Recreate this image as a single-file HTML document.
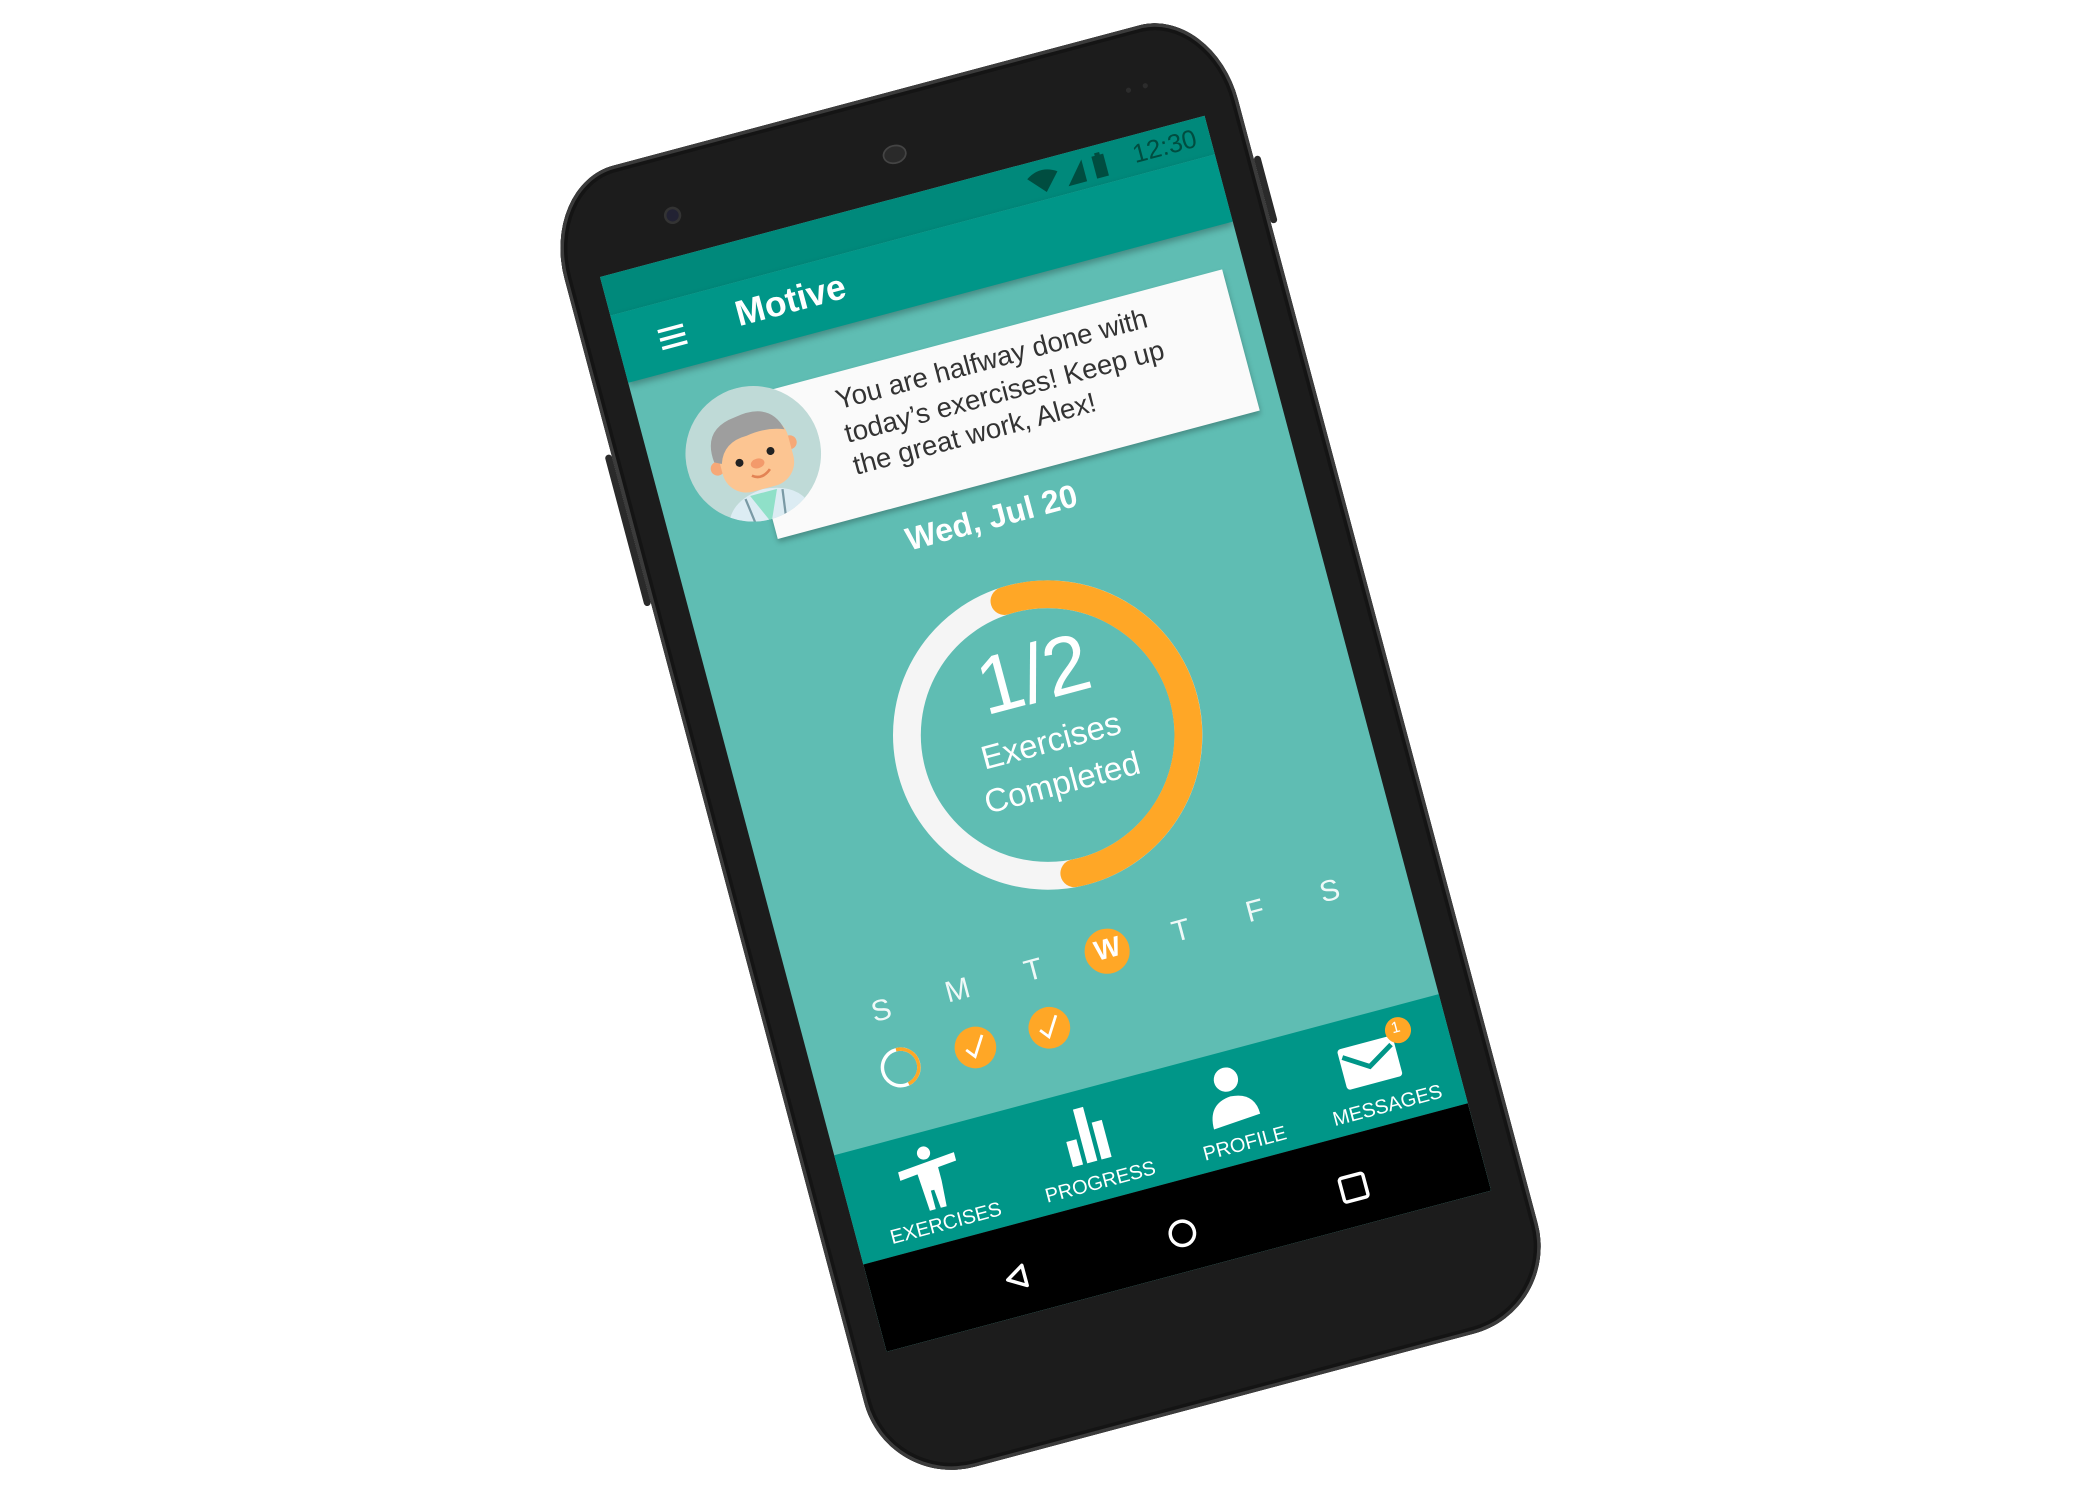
<!DOCTYPE html>
<html><head><meta charset="utf-8"><style>
html,body{margin:0;padding:0;background:#fff;width:2100px;height:1500px;overflow:hidden;font-family:"Liberation Sans",sans-serif}
#ph{position:absolute;left:0;top:0;width:360px;height:640px;transform-origin:0 0;transform:translate(600px,277px) rotate(-14.93deg) scale(1.738)}
.body{position:absolute;left:-20px;top:-60px;width:401px;height:777px;border-radius:44px 44px 52px 52px/56px 56px 52px 52px;background:#1c1c1c;box-shadow:inset 0 0 0 2px #3b3b3b,inset 0 0 0 4px #141414}
.btn{position:absolute;background:#2a2a2a;border-radius:2px}
.scr{position:absolute;left:0;top:0;width:360px;height:640px;overflow:hidden;background:#5fbdb3}
.abs{position:absolute}
.t{position:absolute;white-space:nowrap}
</style></head><body>
<div id="ph">
  <div class="body"></div>
  <div class="btn" style="left:381px;top:30px;width:4px;height:40px"></div>
  <div class="btn" style="left:-24px;top:100px;width:4px;height:90px"></div>
  <div class="abs" style="left:175px;top:-30px;width:14px;height:11px;border-radius:50%;background:#2a2a2a;box-shadow:inset 0 0 0 1px #444"></div>
  <div class="abs" style="left:46px;top:-27px;width:7px;height:7px;border-radius:50%;background:#223;box-shadow:0 0 0 1.5px #333"></div>
  <div class="abs" style="left:320px;top:-27px;width:3px;height:3px;border-radius:50%;background:#2c2c2c"></div>
  <div class="abs" style="left:330px;top:-27px;width:3px;height:3px;border-radius:50%;background:#2c2c2c"></div>

  <div class="scr">
    <div class="abs" style="left:0;top:0;width:360px;height:23px;background:#00897b"></div>
    <div class="t" style="right:8px;top:3px;font-size:15px;color:#004d40">12:30</div>
    <svg class="abs" style="left:250px;top:3px" width="60" height="18" viewBox="0 0 60 18">
      <path d="M2 6 Q11 0 20 6 L11 16 Z" fill="#004d40"/>
      <path d="M24 16 L35 3 L35 16 Z" fill="#004d40"/>
      <rect x="41" y="3" width="7" height="13" fill="#004d40"/><rect x="43" y="1.5" width="3" height="2" fill="#004d40"/>
    </svg>
    <div class="abs" style="left:0;top:23px;width:360px;height:40px;background:#009688;box-shadow:0 2px 4px rgba(0,0,0,.28)"></div>
    <svg class="abs" style="left:22px;top:36px" width="20" height="16" viewBox="0 0 20 16"><path d="M2 3H17M2 8H17M2 13H17" stroke="#fff" stroke-width="2"/></svg>
    <div class="t" style="left:70px;top:30px;font-size:20.5px;font-weight:bold;color:#fff">Motive</div>

    <div class="abs" style="left:60px;top:88px;width:287px;height:84px;background:#fafafa;box-shadow:0 2px 3px rgba(0,0,0,.25)"></div>
    <div class="t" style="left:113px;top:95px;font-size:15.9px;line-height:19.5px;color:#333">You are halfway done with<br>today’s exercises! Keep up<br>the great work, Alex!</div>
    <svg class="abs" style="left:20px;top:82px" width="78" height="78" viewBox="0 0 78 78">
      <defs><clipPath id="c"><circle cx="39" cy="39" r="39"/></clipPath></defs>
      <circle cx="39" cy="39" r="39" fill="#bfdad7"/>
      <g clip-path="url(#c)">
        <path d="M14 80 Q16 62 39 60 Q62 62 64 80 Z" fill="#dcecf3"/>
        <path d="M31 62 L39 80 L47 62 Z" fill="#8fe0c8"/>
        <path d="M28 63 L30 78 M50 63 L48 78" stroke="#7a9aa5" stroke-width="1.3"/>
        <circle cx="17" cy="42" r="4" fill="#f6a877"/><circle cx="61" cy="38" r="4" fill="#f6a877"/>
        <rect x="19" y="20" width="42" height="40" rx="14" fill="#fcc592"/>
        <path d="M16 38 Q14 18 34 16 Q56 12 60 30 Q50 26 38 28 Q24 28 20 40 Z" fill="#9e9e9e"/>
        <circle cx="30" cy="42" r="2.3" fill="#222"/><circle cx="49" cy="40" r="2.3" fill="#222"/>
        <ellipse cx="40" cy="45" rx="4" ry="2.8" fill="#f39a6b"/>
        <path d="M35 51 Q40 55 46 50" stroke="#e38354" stroke-width="1.5" fill="none"/>
      </g>
    </svg>

    <div class="t" style="left:0;width:364px;text-align:center;top:181px;font-size:18.5px;font-weight:bold;color:#fff">Wed, Jul 20</div>

    <svg class="abs" style="left:0;top:0" width="360" height="640" viewBox="0 0 360 640">
      <circle cx="181" cy="321" r="81" fill="none" stroke="#f5f5f5" stroke-width="16"/>
      <path d="M176.8 240.1 A81 81 0 1 1 175.3 401.8" fill="none" stroke="#ffa726" stroke-width="16" stroke-linecap="round"/>
      <circle cx="182" cy="450" r="13" fill="#ffa726"/>
      <circle cx="50" cy="484" r="10.5" fill="none" stroke="#fff" stroke-width="2"/>
      <path d="M50 473.5 A10.5 10.5 0 0 1 52 494.3" fill="none" stroke="#ffa726" stroke-width="2"/>
      <circle cx="94.5" cy="484" r="12" fill="#ffa726"/>
      <circle cx="138.5" cy="484" r="12" fill="#ffa726"/>
      <path d="M89 484 L93 489 L100 478" stroke="#fff" stroke-width="1.6" fill="none"/>
      <path d="M133 484 L137 489 L144 478" stroke="#fff" stroke-width="1.6" fill="none"/>
    </svg>
    <div class="t" style="left:0;width:364px;text-align:center;top:257px;font-size:47px;font-weight:300;color:#fff;line-height:56px">1/2</div>
    <div class="t" style="left:0;width:364px;text-align:center;top:313px;font-size:19px;color:#fff;line-height:25px">Exercises<br>Completed</div>
    <div class="t" style="left:42px;top:440px;font-size:17px;color:rgba(255,255,255,.9)">S</div>
    <div class="t" style="left:86px;top:440px;font-size:17px;color:rgba(255,255,255,.9)">M</div>
    <div class="t" style="left:133px;top:440px;font-size:17px;color:rgba(255,255,255,.9)">T</div>
    <div class="t" style="left:175px;top:441px;font-size:16px;font-weight:bold;color:#fff">W</div>
    <div class="t" style="left:221px;top:440px;font-size:17px;color:rgba(255,255,255,.9)">T</div>
    <div class="t" style="left:265px;top:440px;font-size:17px;color:rgba(255,255,255,.9)">F</div>
    <div class="t" style="left:309px;top:440px;font-size:17px;color:rgba(255,255,255,.9)">S</div>

    <div class="abs" style="left:0;top:523px;width:360px;height:65px;background:#009688"></div>
    <div class="abs" style="left:0;top:588px;width:360px;height:52px;background:#000"></div>
    <svg class="abs" style="left:0;top:520px" width="360" height="120" viewBox="0 520 360 120">
      <circle cx="50" cy="535" r="3.8" fill="#fff"/>
      <path d="M33 542 L67 539 L67 544 L56 545 L56 553 L55 568 L51.5 568 L50.5 557 L48.5 557 L48.5 568 L45 568 L44 553 L43.5 546 L33 547 Z" fill="#fff"/>
      <rect x="131" y="550" width="6" height="15" fill="#fff"/>
      <rect x="139.5" y="533" width="6" height="32" fill="#fff"/>
      <rect x="148" y="543" width="6" height="22" fill="#fff"/>
      <circle cx="229" cy="539" r="7" fill="#fff"/>
      <path d="M215 565 Q215 550 229 549 Q243 550 243 563 Z" fill="#fff"/>
      <rect x="295" y="539" width="33" height="24" rx="2" fill="#fff"/>
      <path d="M297 544 L311 553 L326 544" stroke="#009688" stroke-width="2.8" fill="none"/>
      <circle cx="332" cy="537" r="7.5" fill="#ffa726"/>
      <path d="M88 612 L88 624 L78 618 Z" fill="none" stroke="#fff" stroke-width="2" stroke-linejoin="round"/>
      <circle cx="182" cy="618" r="7" fill="none" stroke="#fff" stroke-width="2"/>
      <rect x="277" y="611" width="14" height="14" rx="1.5" fill="none" stroke="#fff" stroke-width="2"/>
    </svg>
    <div class="t" style="left:328.5px;top:530px;font-size:9px;color:#fff">1</div>
    <div class="t" style="left:2px;width:100px;text-align:center;top:572px;font-size:11.5px;color:#fff">EXERCISES</div>
    <div class="t" style="left:94px;width:100px;text-align:center;top:572px;font-size:11.5px;color:#fff">PROGRESS</div>
    <div class="t" style="left:180px;width:100px;text-align:center;top:572px;font-size:11.5px;color:#fff">PROFILE</div>
    <div class="t" style="left:265px;width:100px;text-align:center;top:572px;font-size:11.5px;color:#fff">MESSAGES</div>
  </div>
</div>
</body></html>
